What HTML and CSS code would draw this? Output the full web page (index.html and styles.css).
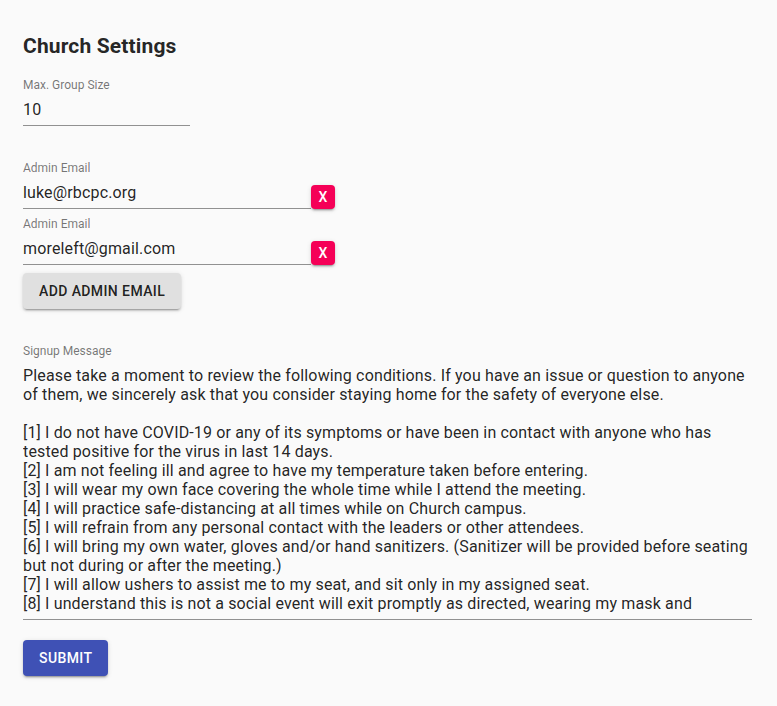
FILE: index.html
```html
<!DOCTYPE html>
<html>
<head>
<meta charset="utf-8">
<link rel="stylesheet" href="styles.css">
</head>
<body>
<div class="appbar-shadow"></div>
<main class="page">
  <h1 class="title">Church Settings</h1>

  <div class="field field-short">
    <label class="label">Max. Group Size</label>
    <div class="input">10</div>
  </div>

  <div class="emails">
    <div class="email-row">
      <div class="field field-email">
        <label class="label">Admin Email</label>
        <div class="input">luke@rbcpc.org</div>
      </div>
      <button class="btn-x">X</button>
    </div>
    <div class="email-row">
      <div class="field field-email">
        <label class="label">Admin Email</label>
        <div class="input">moreleft@gmail.com</div>
      </div>
      <button class="btn-x">X</button>
    </div>
    <button class="btn btn-default">Add Admin Email</button>
  </div>

  <div class="field field-full">
    <label class="label">Signup Message</label>
    <div class="input"><div class="textarea">Please take a moment to review the following conditions. If you have an issue or question to anyone of them, we sincerely ask that you consider staying home for the safety of everyone else.

[1] I do not have COVID-19 or any of its symptoms or have been in contact with anyone who has tested positive for the virus in last 14 days.
[2] I am not feeling ill and agree to have my temperature taken before entering.
[3] I will wear my own face covering the whole time while I attend the meeting.
[4] I will practice safe-distancing at all times while on Church campus.
[5] I will refrain from any personal contact with the leaders or other attendees.
[6] I will bring my own water, gloves and/or hand sanitizers. (Sanitizer will be provided before seating but not during or after the meeting.)
[7] I will allow ushers to assist me to my seat, and sit only in my assigned seat.
[8] I understand this is not a social event will exit promptly as directed, wearing my mask and</div></div>
  </div>

  <button class="btn btn-primary">Submit</button>
</main>
</body>
</html>
```

FILE: styles.css
```css
html, body {
  margin: 0;
  padding: 0;
  background: #fafafa;
  font-family: Roboto, "Liberation Sans", sans-serif;
  color: rgba(0, 0, 0, 0.87);
}

.appbar-shadow {
  height: 0;
  box-shadow: 0 2px 4px -1px rgba(0,0,0,0.2), 0 4px 5px 0 rgba(0,0,0,0.14), 0 1px 10px 0 rgba(0,0,0,0.12);
}

.page {
  padding: 30px 25px 30px 23px;
  display: flex;
  flex-direction: column;
  align-items: flex-start;
}

.title {
  margin: 0;
  font-size: 21px;
  font-weight: 700;
  line-height: 32px;
  letter-spacing: 0.15px;
}

.field {
  display: flex;
  flex-direction: column;
  padding-top: 16px;
  position: relative;
}

.label {
  position: absolute;
  top: 2px;
  left: 0;
  font-size: 12px;
  line-height: 13px;
  color: rgba(0, 0, 0, 0.54);
}

.input {
  font-size: 16px;
  line-height: 19px;
  padding: 7px 0 6px;
  border-bottom: 1px solid rgba(0, 0, 0, 0.42);
  white-space: nowrap;
  letter-spacing: 0.15px;
  margin-bottom: -1px;
}

.field-short {
  margin-top: 15px;
  width: 167px;
}

.emails {
  margin-top: 35px;
  display: flex;
  flex-direction: column;
  align-items: flex-start;
  gap: 8px;
}

.email-row {
  display: flex;
  align-items: flex-end;
}

.field-email {
  width: 288px;
}

.btn-x {
  width: 24px;
  height: 24px;
  padding: 0;
  border: none;
  border-radius: 4px;
  background: #f50057;
  color: #fff;
  font-family: Roboto, "Liberation Sans", sans-serif;
  font-size: 14px;
  font-weight: 500;
  box-shadow: 0 3px 1px -2px rgba(0,0,0,0.2), 0 2px 2px 0 rgba(0,0,0,0.14), 0 1px 5px 0 rgba(0,0,0,0.12);
  margin-bottom: -1px;
}

.btn {
  height: 36px;
  padding: 0 16px;
  border: none;
  border-radius: 4px;
  font-family: Roboto, "Liberation Sans", sans-serif;
  font-size: 14px;
  font-weight: 500;
  letter-spacing: 0.4px;
  text-transform: uppercase;
  box-shadow: 0 3px 1px -2px rgba(0,0,0,0.2), 0 2px 2px 0 rgba(0,0,0,0.14), 0 1px 5px 0 rgba(0,0,0,0.12);
}

.btn-default {
  background: #e0e0e0;
  color: rgba(0, 0, 0, 0.87);
  margin-top: 1px;
}

.field-full {
  align-self: stretch;
  margin-top: 34px;
}

.textarea {
  white-space: pre-wrap;
  height: 247px;
  overflow: hidden;
}

.btn-primary {
  background: #3f51b5;
  color: #fff;
  margin-top: 21px;
}
```
